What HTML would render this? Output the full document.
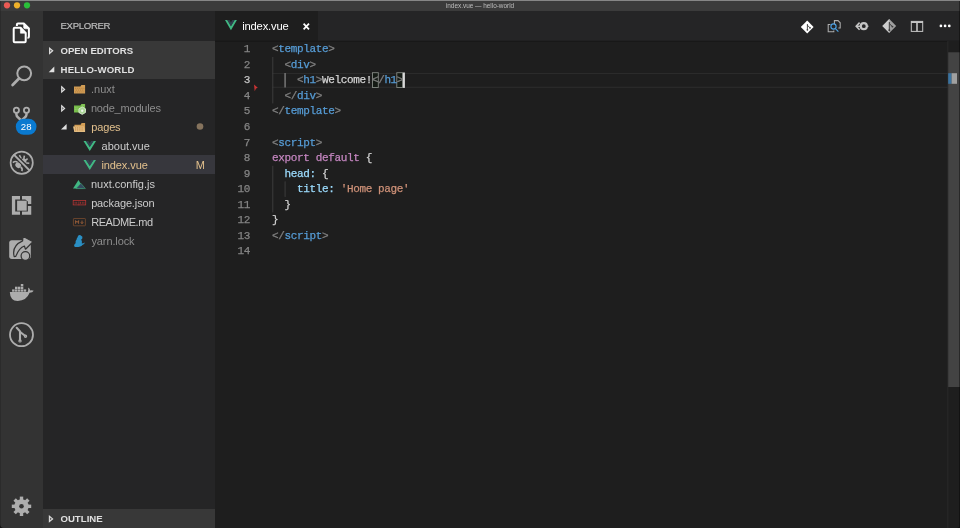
<!DOCTYPE html>
<html><head><meta charset="utf-8"><title>index.vue — hello-world</title>
<style>
*{box-sizing:border-box;margin:0;padding:0}
html,body{width:960px;height:528px;overflow:hidden;background:#1e1e1e}
body{position:relative;font-family:"Liberation Sans",sans-serif;color:#ccc;-webkit-font-smoothing:antialiased}
.abs{position:absolute}
#titlebar{left:0;top:0;width:960px;height:10.7px;background:#3b3b3b;border-top:1px solid #868686}
#title{left:0;width:960px;top:1.6px;text-align:center;font-size:6.45px;line-height:8px;color:#bdbdbd;letter-spacing:-0.02px}
.tl{width:6.4px;height:6.4px;border-radius:50%;top:2.2px}
#activity{left:0;top:11px;width:43px;height:517px;background:#333333;border-left:1px solid #2b2b2b}
#sidebar{left:43px;top:11px;width:172px;height:517px;background:#252526}
#tabs{left:215px;top:11px;width:745px;height:30px;background:#252526}
#tab{left:215px;top:11px;width:103px;height:30px;background:#1e1e1e}
#editor{left:215px;top:41px;width:745px;height:487px;background:#1e1e1e}
.hdr{left:43px;width:172px;height:19.5px;background:#383838;font-weight:bold;font-size:9.6px;line-height:19.5px;color:#e0e0e0;letter-spacing:0.35px}
.hdr span{position:absolute;left:17.8px;top:0.4px;white-space:nowrap}
.row{left:43px;width:172px;height:19px;font-size:11px;line-height:19px;white-space:nowrap}
.row span{position:absolute;top:0}
.code{font-family:"Liberation Mono",monospace;font-size:11px;letter-spacing:-0.36px;-webkit-text-stroke:0.25px;line-height:15.55px;white-space:pre;color:#d4d4d4}
.ln{left:215px;width:35px;text-align:right;color:#858585}
.cl{left:272px}
.g{color:#808080}.b{color:#569cd6}.p{color:#c586c0}.l{color:#9cdcfe}.s{color:#ce9178}

</style></head><body>

<div id="all" class="abs" style="left:0;top:0;width:960px;height:528px;will-change:transform">
<div id="titlebar" class="abs"></div>
<div id="title" class="abs">index.vue — hello-world</div>

<div id="activity" class="abs"></div>
<div id="sidebar" class="abs"></div>
<div id="tabs" class="abs"></div>
<div id="tab" class="abs"></div>
<div id="editor" class="abs"></div>

<!-- SIDEBAR -->
<div id="t_exp" class="abs" style="-webkit-text-stroke:0.2px;top:19px;font-size:9.6px;line-height:14px;color:#bbbbbb;left:60.5px;letter-spacing:-0.32px">EXPLORER</div>
<div class="abs hdr" style="top:40.6px"><span id="t_oe" style="left:17.38px;letter-spacing:0.04px">OPEN EDITORS</span></div>
<div class="abs hdr" style="top:60.1px;height:19.4px"><span id="t_hw" style="left:17.6px;letter-spacing:0.19px">HELLO-WORLD</span></div>

<div class="abs row" style="top:155.1px;background:#37373d;height:19.4px"></div>

<div class="abs row" style="top:79.6px;color:#8c8c8c"><span id="t_nuxt" style="left:48.04px;letter-spacing:-0.02px">.nuxt</span></div>
<div class="abs row" style="top:98.6px;color:#8c8c8c"><span id="t_nm" style="left:47.95px;letter-spacing:-0.2px">node_modules</span></div>
<div class="abs row" style="top:117.6px;color:#e2c08d"><span id="t_pages" style="left:48.18px;letter-spacing:-0.13px">pages</span></div>
<div class="abs row" style="top:136.6px;color:#cccccc"><span id="t_about" style="left:58.6px;letter-spacing:-0.02px">about.vue</span></div>
<div class="abs row" style="top:155.6px;color:#e2c08d"><span id="t_index" style="left:58.39px;letter-spacing:-0.08px">index.vue</span><span id="t_m" style="left:152.8px">M</span></div>
<div class="abs row" style="top:174.6px;color:#cccccc"><span id="t_cfg" style="left:47.98px;letter-spacing:-0.02px">nuxt.config.js</span></div>
<div class="abs row" style="top:193.6px;color:#cccccc"><span id="t_pkg" style="left:48.14px;letter-spacing:-0.12px">package.json</span></div>
<div class="abs row" style="top:212.6px;color:#cccccc"><span id="t_readme" style="left:48.14px;letter-spacing:-0.44px">README.md</span></div>
<div class="abs row" style="top:231.6px;color:#8c8c8c"><span id="t_yarn" style="left:48.47px;letter-spacing:-0.11px">yarn.lock</span></div>

<div class="abs hdr" style="top:509px;height:19px"><span id="t_out" style="left:17.43px;letter-spacing:0.03px">OUTLINE</span></div>

<!-- ICONS -->
<svg class="abs" style="left:0;top:0" width="960" height="528" viewBox="0 0 960 528">
<circle cx="7" cy="5.3" r="3.1" fill="#ea5a54"/><circle cx="17" cy="5.3" r="3.1" fill="#edb02a"/><circle cx="27" cy="5.3" r="3.1" fill="#2abf3a"/>
<!-- activity: explorer -->
<g transform="translate(3.2 -4.4)" fill="none" stroke="#ffffff" stroke-width="2" stroke-linejoin="round">
<path d="M14.7 27.8 H20.6 L25.7 32.9 V41.2 a1 1 0 0 1 -1 1 H14.7 a1 1 0 0 1 -1 -1 V28.8 a1 1 0 0 1 1 -1 Z"/>
<path d="M20.4 27.8 V33.2 H25.7 Z" fill="#ffffff" stroke-width="0.6"/>
</g>
<path d="M14.7 27.8 H20.6 L25.7 32.9 V41.2 a1 1 0 0 1 -1 1 H14.7 a1 1 0 0 1 -1 -1 V28.8 a1 1 0 0 1 1 -1 Z" fill="#333333" stroke="#333333" stroke-width="3.5" stroke-linejoin="round"/>
<g fill="none" stroke="#ffffff" stroke-width="2" stroke-linejoin="round">
<path d="M14.7 27.8 H20.6 L25.7 32.9 V41.2 a1 1 0 0 1 -1 1 H14.7 a1 1 0 0 1 -1 -1 V28.8 a1 1 0 0 1 1 -1 Z"/>
<path d="M20.4 27.8 V33.2 H25.7 Z" fill="#ffffff" stroke-width="0.6"/>
</g>
<!-- activity: search -->
<g fill="none" stroke="#adadad">
<circle cx="24.2" cy="73.3" r="6.9" stroke-width="2"/>
<path d="M19 78.6 L12.6 84.9" stroke-width="2.8" stroke-linecap="round"/>
</g>
<!-- activity: scm -->
<g fill="none" stroke="#adadad">
<circle cx="16.4" cy="110.3" r="2.6" stroke-width="1.8"/>
<circle cx="26.5" cy="110.3" r="2.6" stroke-width="1.8"/>
<path d="M16.4 113 V114.6 Q16.4 116.4 18.4 117.8 L21.6 120.6 M26.5 113 V114.6 Q26.5 116.4 24.5 117.8 L21.3 120.6" stroke-width="2.5"/>
</g>
<rect x="15.8" y="118.8" width="20.7" height="15.9" rx="7.9" fill="#0a7ad0"/>
<!-- activity: debug -->
<g fill="none" stroke="#adadad">
<path d="M19.4 155.2 L21.2 158.6 M24.4 155.6 L23.8 158.8 M27.6 158.6 L25.4 160.4 M29.3 163.3 L26 163 M12.8 162.6 Q15.4 160.6 17.6 162.4 M20.6 167 Q23 168.6 21.8 171.2" stroke-width="1.6"/>
</g>
<ellipse cx="18.2" cy="165.2" rx="2.7" ry="3" fill="#adadad" transform="rotate(-45 18.2 165.2)"/>
<ellipse cx="24" cy="160.8" rx="2.3" ry="2.6" fill="#adadad" transform="rotate(-45 24 160.8)"/>
<path d="M13.4 154.2 L30 170.2" stroke="#333333" stroke-width="4.2" fill="none"/>
<g fill="none" stroke="#adadad">
<circle cx="21.7" cy="162.7" r="11.1" stroke-width="1.7"/>
<path d="M13.6 154.4 L29.8 170.6" stroke-width="2"/>
</g>
<!-- activity: extensions -->
<g fill="#adadad">
<path d="M11.9 196.1 H20 V199.4 H15.2 V211.5 H20 V214.8 H11.9 Z"/>
<path d="M22 196.1 H31.25 V204 H27.9 V201.5 L25.3 199.4 H22 Z"/>
<path d="M22 211.5 H27.9 V206 H31.25 V214.8 H22 Z"/>
<rect x="17.1" y="200.7" width="9.6" height="10" />
</g>
<!-- activity: live share -->
<rect x="9.2" y="240.2" width="21.6" height="18.7" rx="2.6" fill="#adadad"/>
<path d="M14.2 256.6 Q11.4 246 22.6 240.9 L23 236.3 L33 241.8 L25.5 249.2 L24.4 246 Q19 247.8 15.8 256.4 Z" fill="#adadad" stroke="#333333" stroke-width="1.2" stroke-linejoin="round"/>
<circle cx="25.4" cy="256" r="4.3" fill="#adadad" stroke="#333333" stroke-width="1.2"/>
<!-- activity: docker -->
<g fill="#adadad">
<path d="M9.8 291.9 H27.6 Q28.6 289.6 28.2 287.6 Q30 288.6 30.2 290.4 Q32.4 289.8 33.7 290.8 Q32.6 292.8 29.6 292.8 Q26.4 301 17.6 300.9 Q10.2 300.8 9.8 291.9 Z"/>
<rect x="12.1" y="289.4" width="2.5" height="2.3"/><rect x="15" y="289.4" width="2.5" height="2.3"/><rect x="17.9" y="289.4" width="2.5" height="2.3"/><rect x="20.8" y="289.4" width="2.5" height="2.3"/><rect x="23.7" y="289.4" width="2.5" height="2.3"/>
<rect x="15" y="286.7" width="2.5" height="2.3"/><rect x="17.9" y="286.7" width="2.5" height="2.3"/><rect x="20.8" y="286.7" width="2.5" height="2.3"/>
<rect x="20.8" y="284" width="2.5" height="2.3"/>
</g>
<!-- activity: gitlens -->
<g fill="none" stroke="#adadad">
<circle cx="21.5" cy="334.7" r="11.5" stroke-width="1.8"/>
<path d="M16.7 327.8 L20 331.4 V340 M20.2 332 L25 335.8" stroke-width="2.1" stroke-linecap="round"/>
<circle cx="20" cy="340.9" r="1.1" stroke-width="1.2"/>
<circle cx="25.5" cy="336.3" r="1.1" stroke-width="1.2"/>
</g>
<!-- activity: gear -->
<g transform="translate(21.5 506.3)">
<g fill="#adadad">
<circle r="7.1"/>
<rect x="-1.7" y="-9.7" width="3.4" height="19.4"/>
<rect x="-1.7" y="-9.7" width="3.4" height="19.4" transform="rotate(45)"/>
<rect x="-1.7" y="-9.7" width="3.4" height="19.4" transform="rotate(90)"/>
<rect x="-1.7" y="-9.7" width="3.4" height="19.4" transform="rotate(135)"/>
</g>
<circle r="2.3" fill="#333333"/>
</g>

<!-- sidebar arrows -->
<g stroke="#dcdcdc" stroke-width="1.15" fill="#5a5a5a">
<path d="M49.6 48.2 L52.7 50.8 L49.6 53.4 Z"/>
<path d="M49.4 516.3 L52.6 518.9 L49.4 521.5 Z"/>
<path d="M61.7 86.8 L64.6 89.4 L61.7 92 Z"/>
<path d="M61.7 105.8 L64.6 108.4 L61.7 111 Z"/>
</g>
<g fill="#e0e0e0">
<path d="M54.3 66.6 V72.2 H48.7 Z"/>
<path d="M66.6 123.9 V129.4 H61 Z"/>
</g>
<!-- folder .nuxt -->
<path d="M74 86.5 H80.4 L81.4 84.9 H85.1 V93.6 H74 Z" fill="#d29d55"/>
<path d="M75 88.3 H84.4 M75.8 90.1 H84.4 M75 91.9 H84.4" stroke="#a9773a" stroke-width="0.7" stroke-dasharray="1.2 0.9" fill="none"/>
<!-- folder node_modules -->
<path d="M74 105.5 H80.4 L81.4 103.9 H85.1 V112.4 H74 Z" fill="#74bb48"/>
<path d="M75.2 107.4 V111.2 M77 107.4 V111.2 M82.2 104.6 V106.4 M83.8 104.6 V106.4" stroke="#b6dc8c" stroke-width="0.7" stroke-dasharray="1 0.8" fill="none"/>
<path d="M82.2 106.9 L85.5 108.8 V112.5 L82.2 114.4 L78.9 112.5 V108.8 Z" fill="#a9d596" stroke="#dfeed8" stroke-width="0.8"/>
<circle cx="82.2" cy="110.7" r="1.2" fill="#f0f6ec"/>
<!-- folder pages (open) -->
<path d="M74.4 124.7 H80.6 L81.6 123 H85.1 V132 H74.4 Z" fill="#d29d55"/>
<path d="M73 126.6 H84 L85.1 132 H74.4 Z" fill="#e4bf85"/>
<path d="M75.6 127.3 V131.4 M77.4 127.3 V131.4 M79.2 127.3 V131.4 M81 127.3 V131.4 M82.8 127.3 V131.4" stroke="#c07f38" stroke-width="0.8" stroke-dasharray="1.3 0.7" fill="none"/>
<!-- vue icons -->
<path d="M83.5 140.9 L85.89 140.9 L89.75 147.08 L93.61 140.9 L96.0 140.9 L89.75 150.9 Z" fill="#41b883"/>
<path d="M85.89 140.9 L88.3 140.9 L89.75 143.21 L91.19 140.9 L93.61 140.9 L89.75 147.08 Z" fill="#35495e" fill-opacity="0.75"/>
<path d="M83.5 159.9 L85.89 159.9 L89.75 166.08 L93.61 159.9 L96.0 159.9 L89.75 169.9 Z" fill="#41b883"/>
<path d="M85.89 159.9 L88.3 159.9 L89.75 162.21 L91.19 159.9 L93.61 159.9 L89.75 166.08 Z" fill="#35495e" fill-opacity="0.75"/>
<path d="M225.0 20.0 L227.27 20.0 L230.95 26.36 L234.62 20.0 L236.9 20.0 L230.95 30.3 Z" fill="#41b883"/>
<path d="M227.27 20.0 L229.57 20.0 L230.95 22.38 L232.32 20.0 L234.62 20.0 L230.95 26.36 Z" fill="#35495e" fill-opacity="0.75"/>
<!-- nuxt icon -->
<path d="M78.5 180 L83.6 188.6 H73 Z" fill="#41b883"/>
<path d="M80.8 183.2 L85.4 188.6 H76 Z" fill="#35495e" stroke="#41b883" stroke-width="0.5"/>
<!-- npm icon -->
<rect x="73.2" y="200.4" width="12.5" height="4.5" fill="none" stroke="#b53432" stroke-width="0.8"/>
<path d="M75.1 201.8 V203.8 M76.7 201.8 V203.8 M78.9 201.4 V205.4 M80.5 201.8 V203.8 M82.3 201.8 V203.8 M83.9 201.8 V203.8" stroke="#b53432" stroke-width="0.7" fill="none"/>
<!-- md icon -->
<rect x="73.4" y="218.5" width="12" height="7.3" rx="0.6" fill="none" stroke="#84502f" stroke-width="0.7"/>
<path d="M75.6 223.8 V220.6 L77.1 222.4 L78.6 220.6 V223.8 M82 220.6 V223.4 M80.8 222.3 L82 223.7 L83.2 222.3" fill="none" stroke="#b0683c" stroke-width="0.8"/>
<!-- yarn icon -->
<path d="M79.4 235 Q80.8 235 81.4 236 Q82.6 236.2 82.4 237.6 Q82.6 239 81.2 239.6 Q82.4 241.4 81.8 243.6 Q83.4 243.4 84.9 242.6 Q84.6 244.2 82.4 244.9 Q81.6 246 80.2 246.4 Q77.6 247.4 75.2 246.9 Q73.6 246.6 74.2 245 Q74.6 243.8 75.6 243.2 Q75.2 241 76.6 239.6 Q76.6 238 77.6 237.2 Q77.6 235.6 79.4 235 Z" fill="#2a8fc4"/>
<!-- tab close -->
<path d="M303.6 23.6 L309 29.4 M309 23.6 L303.6 29.4" stroke="#ffffff" stroke-width="1.7"/>
<!-- dot -->
<circle cx="200" cy="126.5" r="3.3" fill="#85735d"/>

<!-- toolbar icons -->
<path d="M807.2 20.4 L813.6 26.9 L807.2 33.4 L800.8 26.9 Z" fill="#ffffff"/>
<path d="M807.4 24 V29.6 M807.4 25.2 L809.8 27.6" stroke="#3a3a3a" stroke-width="0.9" fill="none"/>
<circle cx="807.4" cy="29.8" r="0.85" fill="#3a3a3a"/><circle cx="810" cy="27.8" r="0.85" fill="#3a3a3a"/>
<g fill="none" stroke="#adadad" stroke-width="1.05">
<path d="M834.4 24 V20.6 H838 L840.2 22.8 V28 H838.4"/>
<path d="M830.4 24.4 H828.2 V31.8 H833.8 V30.4"/>
</g>
<circle cx="833.5" cy="26.5" r="2.6" fill="none" stroke="#4da3e6" stroke-width="1.1"/>
<path d="M835.4 28.6 L838.4 31.6" stroke="#4da3e6" stroke-width="1.2"/>
<circle cx="863.8" cy="26.2" r="3" fill="none" stroke="#c5c5c5" stroke-width="2.2"/>
<path d="M859.6 22.6 L856.2 26.2 L859.6 29.8" fill="none" stroke="#c5c5c5" stroke-width="1.6"/>
<path d="M856.4 26.2 H860.4 M867 26.2 H868.4" stroke="#c5c5c5" stroke-width="1.4"/>
<path d="M889.3 18.9 L896.2 25.9 L889.3 33 L882.4 25.9 Z" fill="#9f9f9f"/>
<path d="M889.3 18.9 L882.4 25.9 L889.3 33 Z" fill="#cdcdcd"/>
<path d="M889.3 22 V30 M889.3 23.6 L892.2 26.4" stroke="#3a3a3a" stroke-width="1" fill="none"/>
<circle cx="889.3" cy="30.2" r="0.95" fill="#3a3a3a"/><circle cx="892.4" cy="26.6" r="0.95" fill="#3a3a3a"/>
<rect x="911.3" y="21.4" width="11.4" height="10" fill="none" stroke="#c5c5c5" stroke-width="1"/>
<path d="M911 22.2 H923 M917 21.4 V31.4" stroke="#c5c5c5" stroke-width="1.6" fill="none"/>
<circle cx="940.9" cy="25.9" r="1.35" fill="#ffffff"/><circle cx="945.1" cy="25.9" r="1.35" fill="#ffffff"/><circle cx="949.3" cy="25.9" r="1.35" fill="#ffffff"/>

<!-- editor decorations -->
<rect x="215" y="40.7" width="745" height="1.3" fill="#181818"/>
<rect x="272" y="72.9" width="676" height="1" fill="#2d2d2d"/>
<rect x="272" y="86.8" width="676" height="1" fill="#2d2d2d"/>
<rect x="272.3" y="57" width="1" height="46.4" fill="#3d3d3d"/>
<rect x="284.3" y="73" width="1.6" height="14.5" fill="#707070"/>
<rect x="272.3" y="165.8" width="1" height="46.6" fill="#3d3d3d"/>
<rect x="284.6" y="181.4" width="1" height="15.5" fill="#3d3d3d"/>
<rect x="372.5" y="72.7" width="5.8" height="14.8" fill="#141a14" stroke="#858a85" stroke-width="0.9"/>
<rect x="396.8" y="72.7" width="5.8" height="14.8" fill="#141a14" stroke="#858a85" stroke-width="0.9"/>
<rect x="402.9" y="72.5" width="2" height="15.4" fill="#d8d8d8"/>
<path d="M254 84.5 L257.8 87.8 L256 88.6 L254.7 91.2 Z" fill="#c83434"/>
<!-- scrollbar / overview -->
<rect x="948" y="41" width="12" height="487" fill="#1e1e1e"/>
<rect x="947.5" y="41" width="0.8" height="487" fill="#2c2c2c"/>
<rect x="948.2" y="52.3" width="11.8" height="334.7" fill="#434343"/>

<rect x="948.2" y="73.2" width="3.4" height="10.6" fill="#3a74a2"/>
<rect x="951.6" y="73.2" width="5.4" height="10.6" fill="#a0a0a0"/>
<!-- window corners -->
<rect x="959.2" y="1" width="0.8" height="527" fill="#000" fill-opacity="0.5"/>
<rect x="0" y="1" width="0.8" height="10" fill="#000" fill-opacity="0.25"/>
<path d="M0 528 V524.5 Q0.4 527.6 3.5 528 Z" fill="#111"/>
<path d="M960 528 V524.5 Q959.6 527.6 956.5 528 Z" fill="#111"/>
</svg>
<div class="abs" style="left:15.8px;top:118.8px;width:20.7px;height:15.9px;line-height:16.3px;text-align:center;font-size:9.6px;color:#fff;letter-spacing:0.3px;padding-left:0.4px">28</div>

<!-- CODE -->
<div class="abs code ln" style="top:42.3px">1
2
<span style="color:#c6c6c6">3</span>
4
5
6
7
8
9
10
11
12
13
14</div>
<div class="abs code cl" style="top:42.3px"><span class="g">&lt;</span><span class="b">template</span><span class="g">&gt;</span>
  <span class="g">&lt;</span><span class="b">div</span><span class="g">&gt;</span>
    <span class="g">&lt;</span><span class="b">h1</span><span class="g">&gt;</span>Welcome!<span class="g">&lt;/</span><span class="b">h1</span><span class="g">&gt;</span>
  <span class="g">&lt;/</span><span class="b">div</span><span class="g">&gt;</span>
<span class="g">&lt;/</span><span class="b">template</span><span class="g">&gt;</span>

<span class="g">&lt;</span><span class="b">script</span><span class="g">&gt;</span>
<span class="p">export</span> <span class="p">default</span> {
  <span class="l">head:</span> {
    <span class="l">title:</span> <span class="s">'Home page'</span>
  }
}
<span class="g">&lt;/</span><span class="b">script</span><span class="g">&gt;</span>
</div>

<!-- TAB -->
<div id="t_tab" class="abs" style="top:17px;font-size:11.2px;line-height:19px;color:#ffffff;white-space:nowrap;left:242.16px;letter-spacing:-0.16px">index.vue</div>

<!-- EDITOR -->


</div>
</body></html>
